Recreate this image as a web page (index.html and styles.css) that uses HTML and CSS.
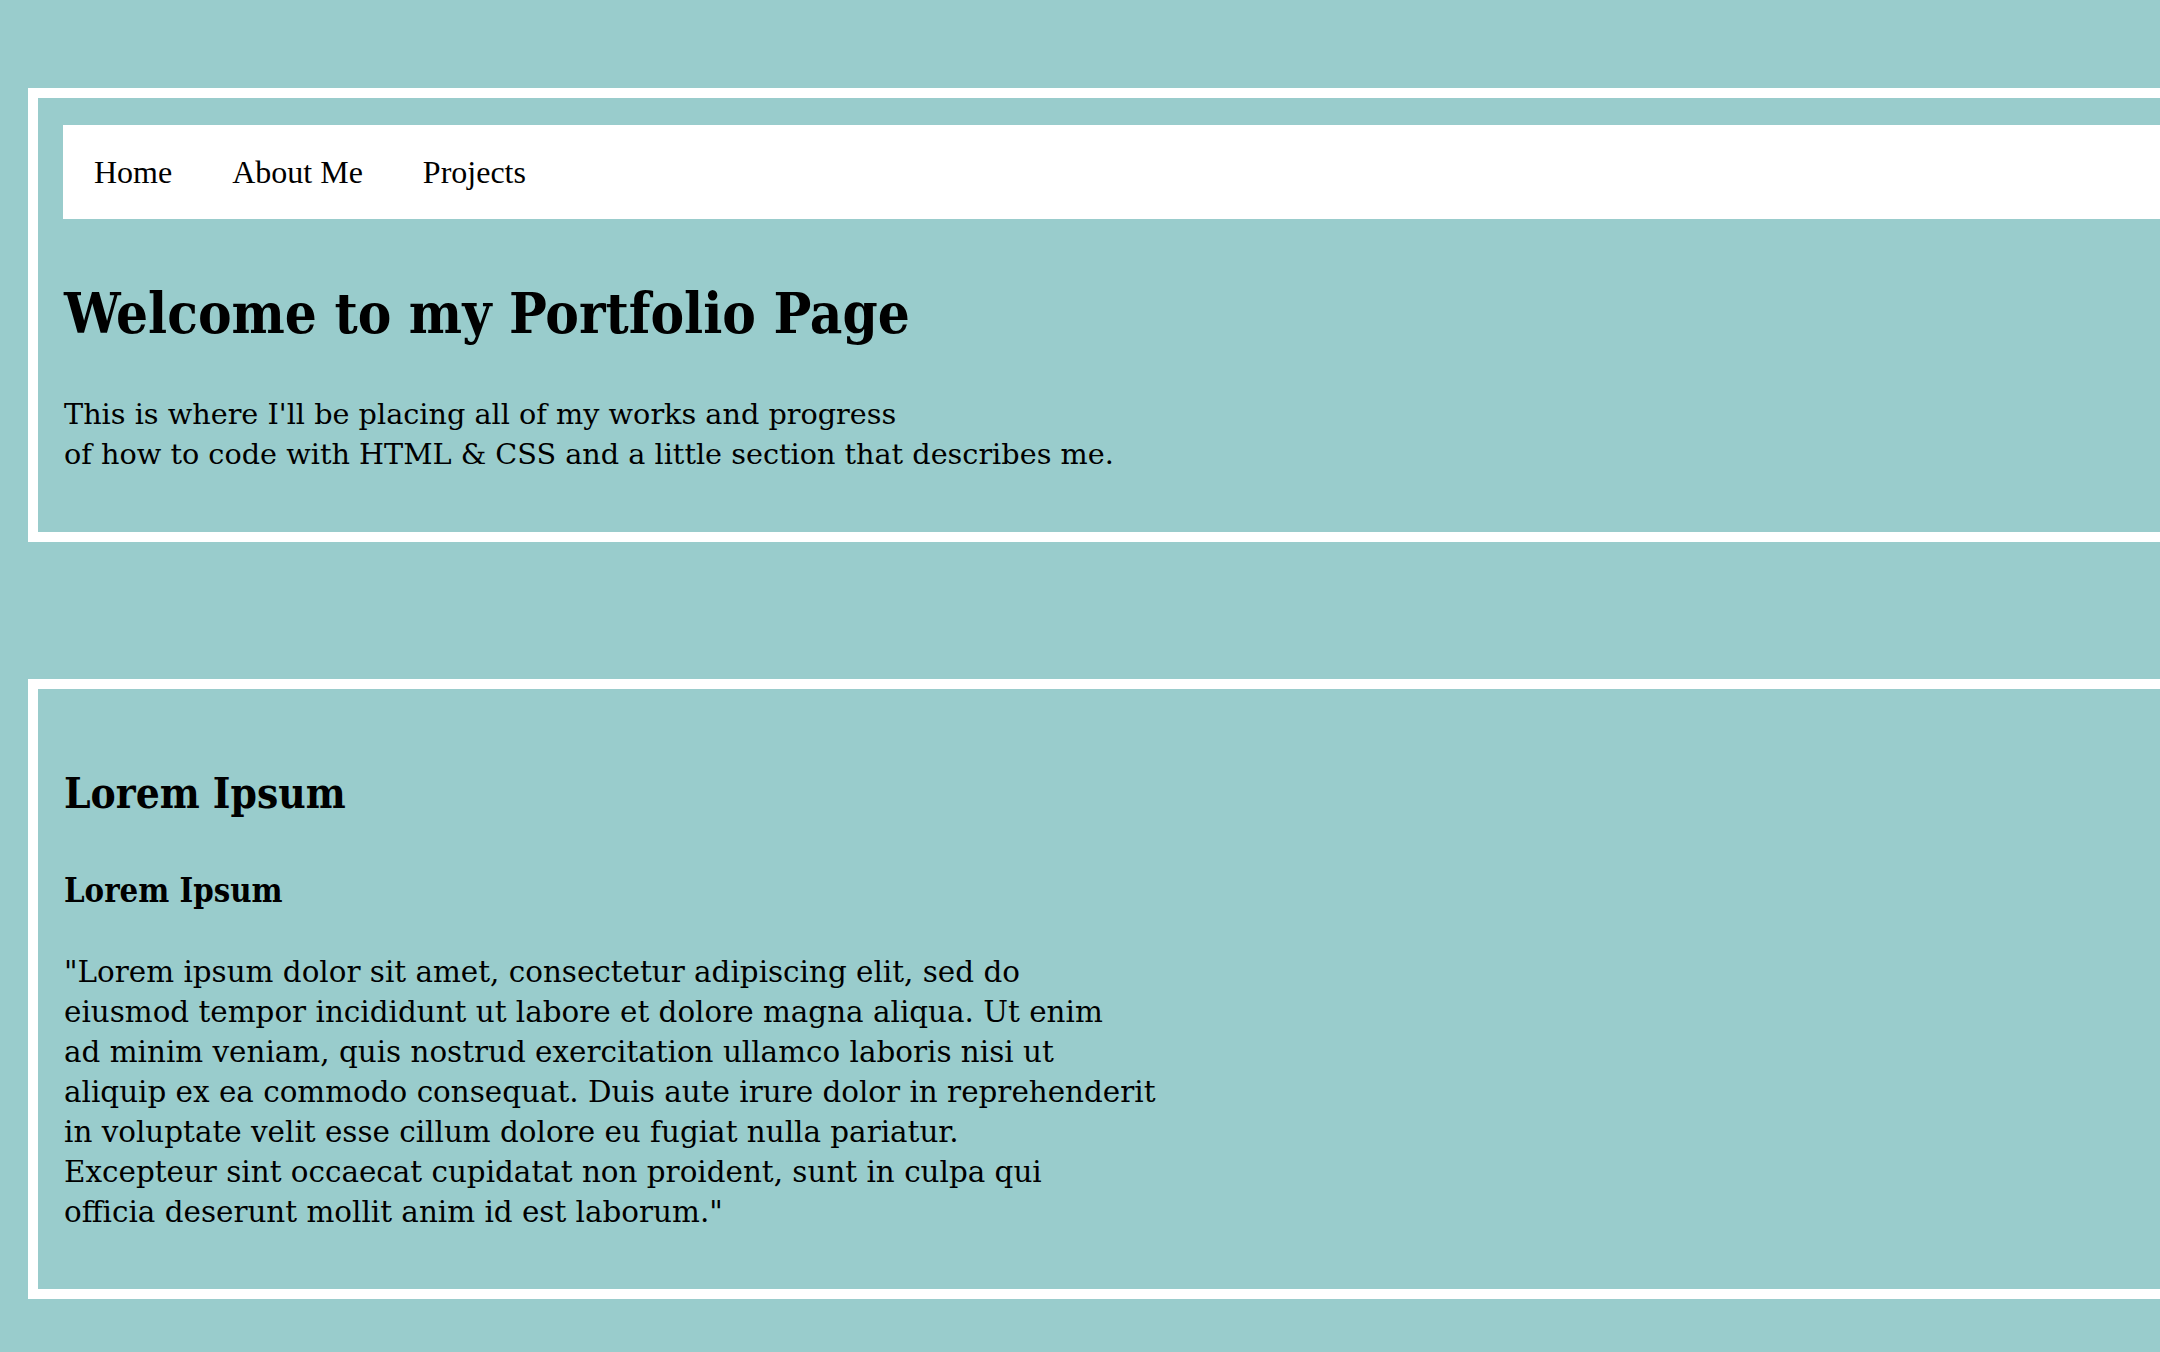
FILE: index.html
```html
<!DOCTYPE html>
<html lang="en">
<head>
<meta charset="utf-8">
<title>Portfolio</title>
<link rel="stylesheet" href="styles.css">
</head>
<body>
<header class="box intro">
  <nav class="nav">
    <a class="nav-link" href="#">Home</a>
    <a class="nav-link" href="#">About Me</a>
    <a class="nav-link" href="#">Projects</a>
  </nav>
  <h1 class="title">Welcome to my Portfolio Page</h1>
  <p class="text">This is where I'll be placing all of my works and progress<br>of how to code with HTML &amp; CSS and a little section that describes me.</p>
</header>
<section class="box about">
  <h2 class="sub-title">Lorem Ipsum</h2>
  <h3 class="small-title">Lorem Ipsum</h3>
  <p class="text">"Lorem ipsum dolor sit amet, consectetur adipiscing elit, sed do<br>eiusmod tempor incididunt ut labore et dolore magna aliqua. Ut enim<br>ad minim veniam, quis nostrud exercitation ullamco laboris nisi ut<br>aliquip ex ea commodo consequat. Duis aute irure dolor in reprehenderit<br>in voluptate velit esse cillum dolore eu fugiat nulla pariatur.<br>Excepteur sint occaecat cupidatat non proident, sunt in culpa qui<br>officia deserunt mollit anim id est laborum."</p>
</section>
</body>
</html>
```

FILE: styles.css
```css
html {
  overflow: hidden;
  background: #99cccc;
}
body {
  margin: 0;
  background: #99cccc;
  color: #000;
  font-family: "DejaVu Serif", serif;
}
.box {
  border: 10px solid #fff;
  margin-left: 28px;
  margin-right: -80px;
  padding-left: 25px;
}
.intro {
  margin-top: 88px;
  padding-top: 27px;
  padding-bottom: 58px;
}
.about {
  margin-top: 137px;
  padding-top: 80px;
  padding-bottom: 57px;
}
.nav {
  display: flex;
  background: #fff;
  padding: 29px 0 29px 1px;
}
.nav-link {
  font-family: "Liberation Serif", "Times New Roman", serif;
  font-size: 32px;
  line-height: 36px;
  color: #000;
  text-decoration: none;
  padding: 0 30px;
}
.title,
.sub-title,
.small-title {
  font-family: "DejaVu Serif Condensed", "DejaVu Serif", serif;
  font-weight: bold;
  margin-bottom: 0;
  margin-left: 1px;
}
.title {
  font-size: 56px;
  line-height: 64px;
  margin-top: 62px;
}
.sub-title {
  font-size: 42px;
  line-height: 50px;
  margin-top: 0;
}
.small-title {
  font-size: 32.6px;
  line-height: 40px;
  margin-top: 52px;
}
.text {
  font-family: "DejaVu Serif", serif;
  font-size: 28.7px;
  line-height: 40px;
  white-space: nowrap;
  margin: 49px 0 0 1px;
}
.about .text {
  font-size: 29.4px;
  margin-top: 41px;
}
```
